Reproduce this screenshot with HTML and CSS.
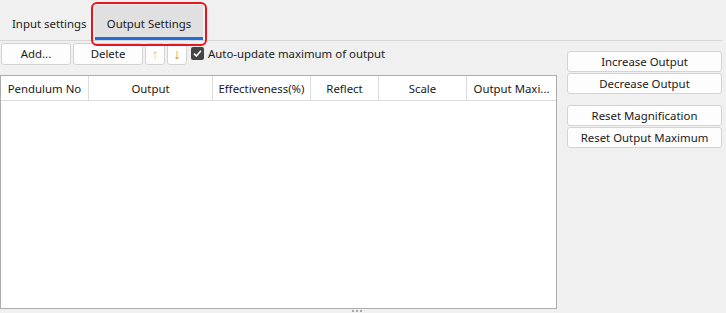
FILE: index.html
```html
<!DOCTYPE html>
<html>
<head>
<meta charset="utf-8">
<link rel="stylesheet" href="styles.css">
</head>
<body>
<div class="page">
  <div class="tabbar">
    <div class="tab tab-input">Input settings</div>
    <div class="tab tab-active">Output Settings<span class="highlight"></span></div>
  </div>
  <div class="main">
    <div class="left">
      <div class="toolbar">
        <button class="btn btn-wide">Add...</button>
        <button class="btn btn-wide">Delete</button>
        <button class="btn btn-arrow up">↑</button>
        <button class="btn btn-arrow down">↓</button>
        <label class="check">
          <span class="box"><svg width="11" height="11" viewBox="0 0 11 11"><path d="M2 5.6 L4.4 8 L9 2.8" fill="none" stroke="#fff" stroke-width="1.6"/></svg></span>
          Auto-update maximum of output
        </label>
      </div>
      <div class="table">
        <div class="thead">
          <div class="th c1">Pendulum No</div>
          <div class="th c2">Output</div>
          <div class="th c3">Effectiveness(%)</div>
          <div class="th c4">Reflect</div>
          <div class="th c5">Scale</div>
          <div class="th c6">Output Maxi...</div>
        </div>
      </div>
    </div>
    <div class="right">
      <div class="group">
        <button class="btn side">Increase Output</button>
        <button class="btn side">Decrease Output</button>
      </div>
      <div class="group">
        <button class="btn side">Reset Magnification</button>
        <button class="btn side">Reset Output Maximum</button>
      </div>
    </div>
  </div>
  <div class="grip"><i></i><i></i><i></i></div>
</div>
</body>
</html>
```
FILE: styles.css
```css
* { box-sizing: border-box; }
html, body { margin: 0; padding: 0; }
body {
  background: #f0f0f0;
  font-family: "Noto Sans", "Open Sans", sans-serif;
  font-size: 11.4px;
  color: #1a1a1a;
  width: 726px;
  height: 313px;
  overflow: hidden;
}
.page { padding: 0 4px 0 0; }
.tabbar {
  display: flex;
  height: 41px;
  border-bottom: 1px solid #d6d6d6;
}
.tab {
  height: 35px;
  margin-top: 5px;
  display: flex;
  align-items: center;
  padding-top: 2px;
  white-space: nowrap;
}
.tab-input { width: 95px; padding-left: 12px; }
.tab-active {
  position: relative;
  background: #e0e0e0;
  width: 108px;
  justify-content: center;
  border-bottom: 3px solid #1f6fd6;
  padding-top: 4px;
}
.highlight {
  position: absolute;
  left: -4px;
  top: -3px;
  width: 116px;
  height: 44px;
  border: 2px solid #e8161c;
  border-radius: 6px;
}
.main { display: flex; }
.left { width: 557px; }
.toolbar {
  display: flex;
  align-items: center;
  height: 23px;
  margin-top: 1px;
  padding-left: 1px;
  gap: 2px;
}
.btn {
  font: inherit;
  color: #1a1a1a;
  background: #fdfdfd;
  border: 1px solid #d4d4d4;
  border-radius: 3px;
  height: 22px;
  padding: 0;
  white-space: nowrap;
}
.btn-wide { width: 70px; }
.btn-arrow { width: 20px; font-size: 14px; line-height: 1; }
.up { color: #e8c48e; }
.down { color: #c98a3a; }
.check {
  display: flex;
  align-items: center;
  gap: 4px;
  margin-left: 2px;
}
.box {
  width: 13px;
  height: 13px;
  background: #444;
  border-radius: 2px;
  display: flex;
  align-items: center;
  justify-content: center;
}
.table {
  margin-top: 10px;
  height: 234px;
  background: #fff;
  border: 1px solid #acacac;
}
.thead {
  display: flex;
  height: 25px;
  border-bottom: 1px solid #dcdcdc;
}
.th {
  display: flex;
  align-items: center;
  justify-content: center;
  border-right: 1px solid #dcdcdc;
  white-space: nowrap;
}
.c1 { width: 88px; }
.c2 { width: 124px; }
.c3 { width: 98px; }
.c4 { width: 68px; }
.c5 { width: 88px; }
.c6 { width: 89px; border-right: none; }
.right {
  margin-left: 10px;
  width: 155px;
  padding-top: 10px;
  display: flex;
  flex-direction: column;
  gap: 11px;
}
.group { display: flex; flex-direction: column; gap: 1px; }
.side { width: 155px; height: 21px; }
.grip {
  display: flex;
  justify-content: center;
  gap: 2px;
  padding-top: 1px;
  padding-right: 8px;
}
.grip i {
  width: 2px;
  height: 2px;
  background: #a8a8a8;
}
```
